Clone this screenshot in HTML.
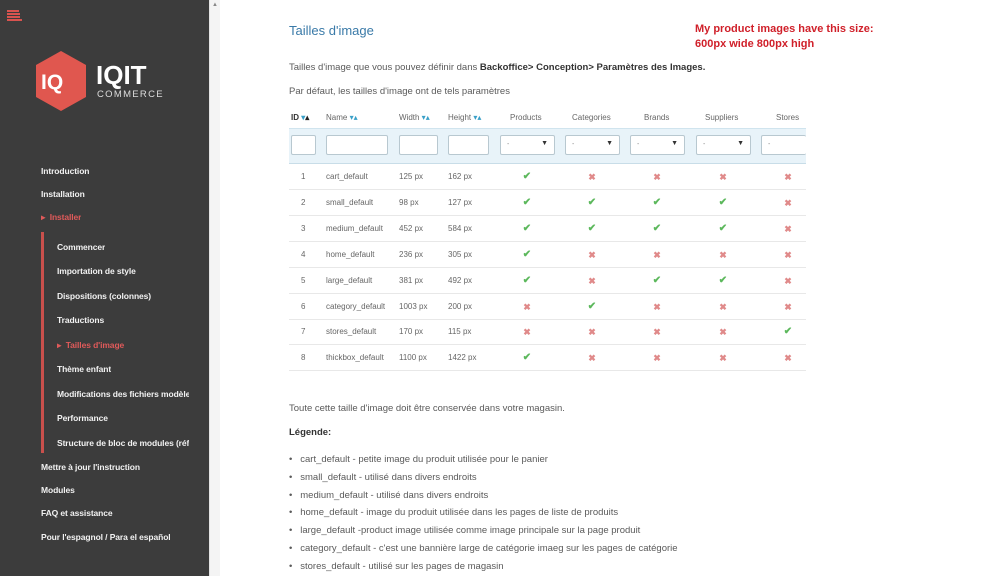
<!DOCTYPE html>
<html><head><meta charset="utf-8"><style>
*{margin:0;padding:0;box-sizing:border-box}
body{width:1000px;height:576px;overflow:hidden;position:relative;background:#fff;font-family:"Liberation Sans",sans-serif}
#sb{position:absolute;left:0;top:0;width:209px;height:576px;background:#3c3c3c}
#scr{position:absolute;left:209px;top:0;width:11px;height:576px;background:#f4f4f4;border-left:1px solid #e4e4e4}
.n{position:absolute;color:#f2f2f2;font-size:8.5px;font-weight:bold;white-space:nowrap;overflow:hidden;letter-spacing:-.1px}
.r{color:#e05a5a}
.t{position:absolute;font-size:9.5px;color:#5a5a5a;white-space:nowrap}
.c{position:absolute;font-size:8px;color:#666;white-space:nowrap}
.ok{position:absolute;color:#5cb85c;font-size:10px;font-weight:bold;transform:translateX(-50%)}
.ko{position:absolute;color:#e08a8a;font-size:9px;font-weight:bold;transform:translateX(-50%)}
.in{position:absolute;top:135px;height:20px;background:#fff;border:1px solid #b8c8d0;border-radius:2px;font-size:7px;color:#888;padding:5px 0 0 6px}
.in b{position:absolute;right:6px;top:4px;font-size:7px;color:#333}
.row{position:absolute;left:289px;width:517px;height:1px;background:#e8e8e8}
</style></head><body>
<div id="sb">
  <div style="position:absolute;left:7px;top:10px;width:12px;height:2px;background:#d9534f"></div>
  <div style="position:absolute;left:7px;top:13px;width:13px;height:2px;background:#d9534f"></div>
  <div style="position:absolute;left:7px;top:16px;width:13px;height:2px;background:#d9534f"></div>
  <div style="position:absolute;left:7px;top:19px;width:15px;height:2px;background:#d9534f"></div>
  <svg style="position:absolute;left:34px;top:51px" width="140" height="62" viewBox="0 0 140 62">
    <polygon points="27,0 52,14 52,46 27,60 2,46 2,14" fill="#e0574f"/>
    <text x="7" y="38" font-family="Liberation Sans" font-weight="bold" font-size="21" fill="#fff">IQ</text>
    <text x="62" y="33" font-family="Liberation Sans" font-weight="bold" font-size="26" fill="#fff">IQIT</text>
    <text x="63" y="46" font-family="Liberation Sans" font-size="9.5" fill="#ddd" letter-spacing="1.3">COMMERCE</text>
  </svg>
  <div class="n" style="left:41px;top:166px">Introduction</div>
  <div class="n" style="left:41px;top:189px">Installation</div>
  <div class="n r" style="left:41px;top:212px">▸&nbsp; Installer</div>
  <div style="position:absolute;left:41px;top:232px;width:3px;height:221px;background:#c9504c"></div>
  <div class="n" style="left:57px;top:242px">Commencer</div>
  <div class="n" style="left:57px;top:266px">Importation de style</div>
  <div class="n" style="left:57px;top:291px">Dispositions (colonnes)</div>
  <div class="n" style="left:57px;top:315px">Traductions</div>
  <div class="n r" style="left:57px;top:340px">▸&nbsp; Tailles d'image</div>
  <div class="n" style="left:57px;top:364px">Thème enfant</div>
  <div class="n" style="left:57px;top:389px;width:132px">Modifications des fichiers modèles</div>
  <div class="n" style="left:57px;top:413px">Performance</div>
  <div class="n" style="left:57px;top:438px;width:132px">Structure de bloc de modules (réf)</div>
  <div class="n" style="left:41px;top:462px">Mettre à jour l'instruction</div>
  <div class="n" style="left:41px;top:485px">Modules</div>
  <div class="n" style="left:41px;top:508px">FAQ et assistance</div>
  <div class="n" style="left:41px;top:532px">Pour l'espagnol / Para el español</div>
</div>
<div id="scr"><div style="position:absolute;left:2px;top:2px;font-size:6px;color:#888">▲</div></div>

<div style="position:absolute;left:289px;top:23px;font-size:13px;color:#3a7aa8">Tailles d'image</div>
<div style="position:absolute;left:695px;top:22px;font-size:11px;font-weight:bold;color:#d0202a;line-height:15px">My product images have this size:<br>600px wide 800px high</div>
<div class="t" style="left:289px;top:62px">Tailles d'image que vous pouvez définir dans <b style="color:#333">Backoffice&gt; Conception&gt; Paramètres des Images.</b></div>
<div class="t" style="left:289px;top:86px">Par défaut, les tailles d'image ont de tels paramètres</div>

<div class="c" style="left:291px;top:113px;color:#333;font-weight:bold">ID <span style="color:#3aa0c8">▾</span><span style="color:#222">▴</span></div>
<div class="c" style="left:326px;top:113px">Name <span style="color:#3aa0c8">▾▴</span></div>
<div class="c" style="left:399px;top:113px">Width <span style="color:#3aa0c8">▾▴</span></div>
<div class="c" style="left:448px;top:113px">Height <span style="color:#3aa0c8">▾▴</span></div>
<div class="c" style="left:510px;top:113px">Products</div>
<div class="c" style="left:572px;top:113px">Categories</div>
<div class="c" style="left:644px;top:113px">Brands</div>
<div class="c" style="left:705px;top:113px">Suppliers</div>
<div class="c" style="left:776px;top:113px">Stores</div>
<div style="position:absolute;left:289px;top:128px;width:517px;height:36px;background:#e8f3f9;border-top:1px solid #d0e4ee;border-bottom:1px solid #c8dde8"></div>
<div class="in" style="left:291px;width:25px"></div>
<div class="in" style="left:326px;width:62px"></div>
<div class="in" style="left:399px;width:39px"></div>
<div class="in" style="left:448px;width:41px"></div>
<div class="in" style="left:500px;width:55px">-<b>▼</b></div>
<div class="in" style="left:565px;width:55px">-<b>▼</b></div>
<div class="in" style="left:630px;width:55px">-<b>▼</b></div>
<div class="in" style="left:696px;width:55px">-<b>▼</b></div>
<div class="in" style="left:761px;width:45px;border-right:none">-</div>

<div id="rows"></div>
<script>
var d=[["1","cart_default","125 px","162 px","10000"],["2","small_default","98 px","127 px","11110"],["3","medium_default","452 px","584 px","11110"],["4","home_default","236 px","305 px","10000"],["5","large_default","381 px","492 px","10110"],["6","category_default","1003 px","200 px","01000"],["7","stores_default","170 px","115 px","00001"],["8","thickbox_default","1100 px","1422 px","10000"]];
var cx=[527,592,657,723,788],h="";
d.forEach(function(r,i){var y=172+i*25.9;
h+='<div class="c" style="left:301px;top:'+y+'px">'+r[0]+'</div><div class="c" style="left:326px;top:'+y+'px">'+r[1]+'</div><div class="c" style="left:399px;top:'+y+'px">'+r[2]+'</div><div class="c" style="left:448px;top:'+y+'px">'+r[3]+'</div>';
for(var k=0;k<5;k++){h+=r[4][k]=="1"?'<div class="ok" style="left:'+cx[k]+'px;top:'+(y-1)+'px">✔</div>':'<div class="ko" style="left:'+cx[k]+'px;top:'+y+'px">✖</div>';}
h+='<div class="row" style="top:'+(y+17)+'px"></div>';});
document.getElementById('rows').innerHTML=h;
</script>

<div class="t" style="left:289px;top:403px">Toute cette taille d'image doit être conservée dans votre magasin.</div>
<div class="t" style="left:289px;top:427px;font-weight:bold;color:#333">Légende:</div>
<div class="t" style="left:289px;top:451px;line-height:17.8px">
• &nbsp;&nbsp;cart_default - petite image du produit utilisée pour le panier<br>
• &nbsp;&nbsp;small_default - utilisé dans divers endroits<br>
• &nbsp;&nbsp;medium_default - utilisé dans divers endroits<br>
• &nbsp;&nbsp;home_default - image du produit utilisée dans les pages de liste de produits<br>
• &nbsp;&nbsp;large_default -product image utilisée comme image principale sur la page produit<br>
• &nbsp;&nbsp;category_default - c'est une bannière large de catégorie imaeg sur les pages de catégorie<br>
• &nbsp;&nbsp;stores_default - utilisé sur les pages de magasin
</div>
</body></html>
